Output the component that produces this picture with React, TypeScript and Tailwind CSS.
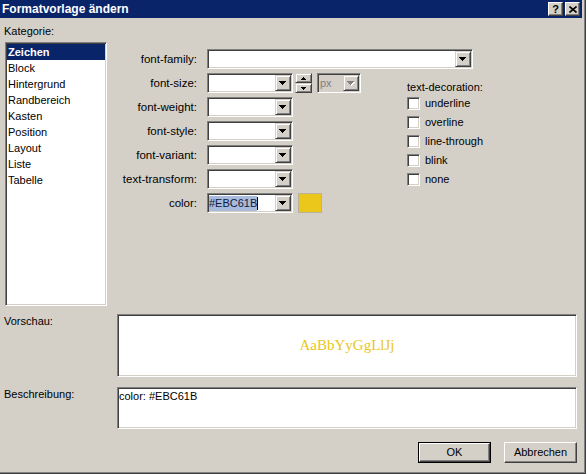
import clsx from 'clsx';

// classic 3D edges
const sunken =
  'border border-t-[#808080] border-l-[#808080] border-r-white border-b-white shadow-[inset_1px_1px_0_#404040,inset_-1px_-1px_0_#d4d0c8]';
const raised =
  'border border-t-[#d4d0c8] border-l-[#d4d0c8] border-r-[#404040] border-b-[#404040] shadow-[inset_1px_1px_0_#ffffff,inset_-1px_-1px_0_#808080] bg-[#d4d0c8]';
const pushBtn =
  'border border-t-white border-l-white border-r-[#404040] border-b-[#404040] shadow-[inset_-1px_-1px_0_#808080] bg-[#d4d0c8]';

const categories = ['Zeichen', 'Block', 'Hintergrund', 'Randbereich', 'Kasten', 'Position', 'Layout', 'Liste', 'Tabelle'];
const decorations = ['underline', 'overline', 'line-through', 'blink', 'none'];

function DownArrow({ disabled }: { disabled?: boolean }) {
  const d = 'M0 0h7v1H0z M1 1h5v1H1z M2 2h3v1H2z M3 3h1v1H3z';
  return (
    <svg width="8" height="5" viewBox="0 0 8 5" shapeRendering="crispEdges">
      {disabled && <path d={d} fill="#ffffff" transform="translate(1 1)" />}
      <path d={d} fill={disabled ? '#808080' : '#000000'} />
    </svg>
  );
}

function SmallArrow({ up }: { up?: boolean }) {
  return (
    <svg width="5" height="3" viewBox="0 0 5 3" shapeRendering="crispEdges">
      <path d={up ? 'M2 0h1v1H2z M1 1h3v1H1z M0 2h5v1H0z' : 'M0 0h5v1H0z M1 1h3v1H1z M2 2h1v1H2z'} fill="#000" />
    </svg>
  );
}

function Combo({ className, children, disabled }: { className?: string; children?: React.ReactNode; disabled?: boolean }) {
  return (
    <div className={clsx(sunken, 'flex h-[20px] p-[1px]', disabled ? 'bg-[#d4d0c8]' : 'bg-white', className)}>
      <div className="flex-1 flex items-center overflow-hidden">{children}</div>
      <div className={clsx(raised, 'w-[16px] h-full flex items-center justify-center')}>
        <DownArrow disabled={disabled} />
      </div>
    </div>
  );
}

function Row({ label, children }: { label: string; children?: React.ReactNode }) {
  return (
    <div className="flex items-center h-[20px]">
      <div className="w-[90px] mr-[10px] text-right text-[11.5px] leading-[13px] whitespace-nowrap">{label}</div>
      {children}
    </div>
  );
}

export default function App() {
  return (
    <div className="w-[586px] h-[474px] bg-[#d4d0c8] border-r border-b border-[#404040] text-[11px] text-black font-['Liberation_Sans',Arial,sans-serif] select-none">
      <div className="h-full border-r border-b border-[#808080] pr-[2px] flex flex-col">
        {/* title bar */}
        <div className="h-[18px] bg-[#0a246a] flex items-center justify-between pl-[2px] pr-[2px]">
          <span className="text-white font-bold text-[12px] leading-[14px] whitespace-nowrap">Formatvorlage ändern</span>
          <div className="flex gap-[2px]">
            <div className={clsx(pushBtn, 'w-[15px] h-[14px] flex items-center justify-center')}>
              <span className="font-bold text-[11px] leading-[11px] pt-[1px]">?</span>
            </div>
            <div className={clsx(pushBtn, 'w-[15px] h-[14px] flex items-center justify-center')}>
              <svg width="8" height="7" viewBox="0 0 8 7">
                <path d="M0.5 0.5 L7.5 6.5 M7.5 0.5 L0.5 6.5" stroke="#000" strokeWidth="1.6" />
              </svg>
            </div>
          </div>
        </div>

        {/* body */}
        <div className="flex-1 flex flex-col pl-[4px] pr-[5px] pt-[7px]">
          <div className="leading-[13px] h-[13px]">Kategorie:</div>

          <div className="flex mt-[4px]">
            <div className={clsx(sunken, 'ml-[1px] w-[102px] h-[264px] bg-white p-[1px]')}>
              {categories.map((c, i) => (
                <div
                  key={c}
                  className={clsx(
                    'h-[16px] leading-[16px] pl-[1px] whitespace-nowrap',
                    i === 0 && 'bg-[#0a246a] text-white font-bold'
                  )}
                >
                  {c}
                </div>
              ))}
            </div>

            <div className="flex flex-col pt-[7px]">
              <Row label="font-family:">
                <Combo className="w-[266px]" />
              </Row>
              <div className="flex mt-[4px]">
                <div className="flex flex-col gap-[4px]">
                  <Row label="font-size:">
                    <Combo className="w-[86px]" />
                    <div className="ml-[2px] w-[17px] h-[20px] flex flex-col">
                      <div className={clsx(raised, 'h-[10px] flex items-center justify-center')}>
                        <SmallArrow up />
                      </div>
                      <div className={clsx(raised, 'h-[10px] flex items-center justify-center')}>
                        <SmallArrow />
                      </div>
                    </div>
                    <Combo className="ml-[5px] w-[44px]" disabled>
                      <span className="text-[#808080] pl-[1px] leading-[13px]">px</span>
                    </Combo>
                  </Row>
                  <Row label="font-weight:">
                    <Combo className="w-[86px]" />
                  </Row>
                  <Row label="font-style:">
                    <Combo className="w-[86px]" />
                  </Row>
                  <Row label="font-variant:">
                    <Combo className="w-[86px]" />
                  </Row>
                  <Row label="text-transform:">
                    <Combo className="w-[86px]" />
                  </Row>
                  <Row label="color:">
                    <Combo className="w-[86px]">
                      <span className="bg-[#a9bbdc] text-[#0a1a40] leading-[15px] h-[15px]">#EBC61B</span>
                      <span className="w-[1px] h-[13px] bg-black" />
                    </Combo>
                    <div className="ml-[5px] w-[24px] h-[20px] bg-[#EBC61B] border border-[#b8b0a0]" />
                  </Row>
                </div>

                <div className="ml-[46px] pt-[7px] flex flex-col">
                  <div className="leading-[14px] h-[14px] whitespace-nowrap">text-decoration:</div>
                  {decorations.map((d) => (
                    <div key={d} className="h-[19px] flex items-center">
                      <div className={clsx(sunken, 'w-[13px] h-[13px] bg-white')} />
                      <span className="ml-[5px] leading-[13px] whitespace-nowrap">{d}</span>
                    </div>
                  ))}
                </div>
              </div>
            </div>
          </div>

          {/* preview */}
          <div className="flex mt-[8px]">
            <div className="w-[113px] pt-[1px] leading-[13px]">Vorschau:</div>
            <div className={clsx(sunken, 'w-[460px] h-[63px] bg-white flex items-center justify-center')}>
              <span className="font-['Liberation_Serif',serif] text-[15px] text-[#EBC61B] leading-[17px]">AaBbYyGgLlJj</span>
            </div>
          </div>

          {/* description */}
          <div className="flex mt-[10px]">
            <div className="w-[113px] pt-[1px] leading-[13px]">Beschreibung:</div>
            <div className={clsx(sunken, 'w-[460px] h-[42px] bg-white pl-[1px] pt-[2px] leading-[13px]')}>
              color: #EBC61B
            </div>
          </div>

          {/* buttons */}
          <div className="flex justify-end gap-[13px] mt-[13px]">
            <div className="w-[73px] h-[21px] border border-black">
              <div className={clsx(pushBtn, 'w-full h-full flex items-center justify-center leading-[13px]')}>OK</div>
            </div>
            <div className={clsx(pushBtn, 'w-[73px] h-[21px] flex items-center justify-center leading-[13px]')}>
              Abbrechen
            </div>
          </div>
        </div>
      </div>
    </div>
  );
}
